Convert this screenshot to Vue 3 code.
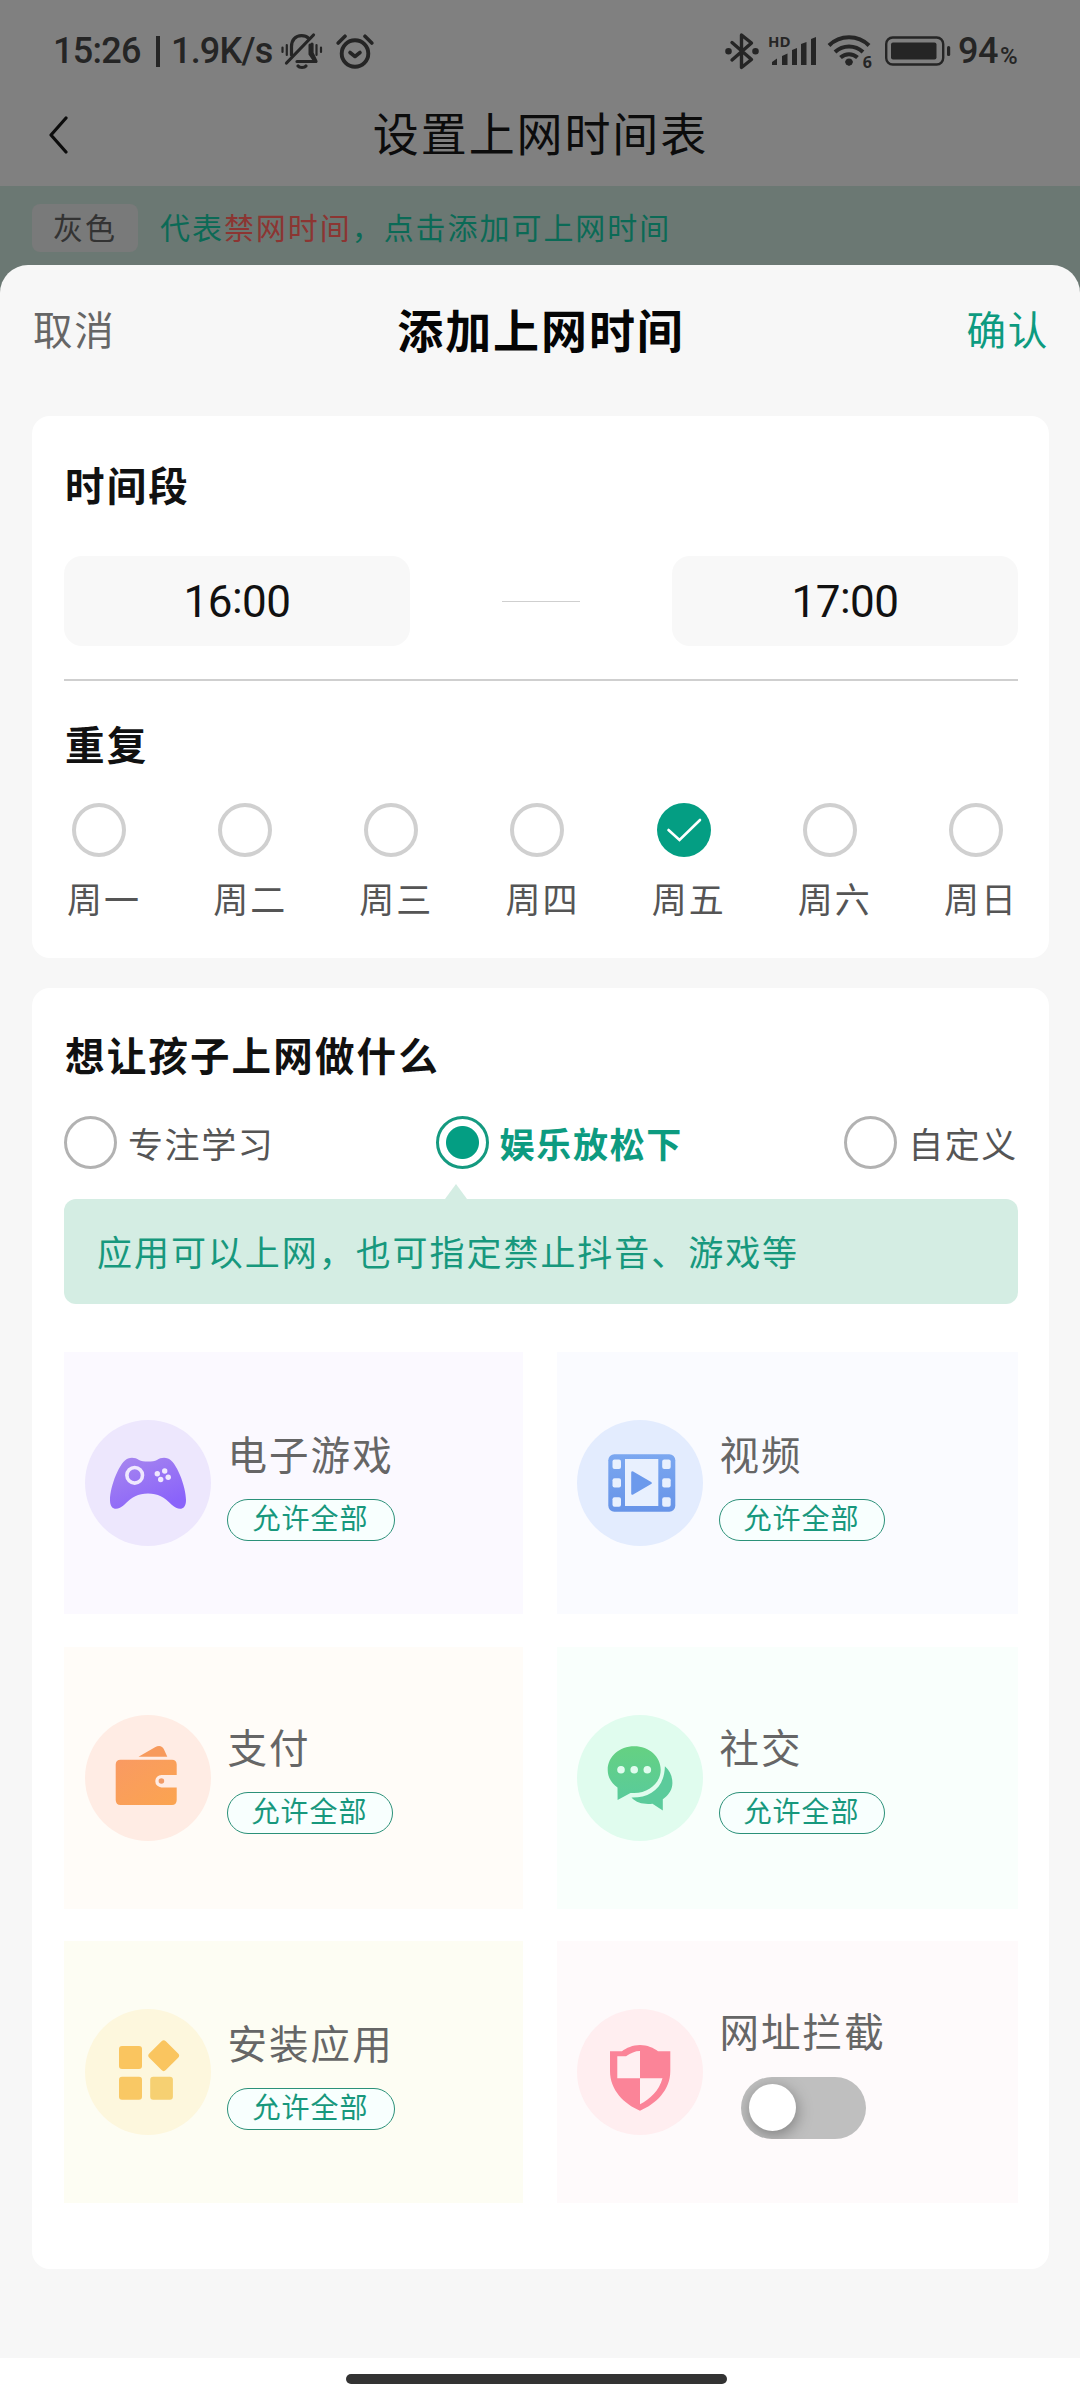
<script setup>
import { ref } from 'vue'

const days = ['周一', '周二', '周三', '周四', '周五', '周六', '周日']
const selectedDay = ref(4)
const modes = ['专注学习', '娱乐放松下', '自定义']
const selectedMode = ref(1)
const tiles = [
  { key: 'game', name: '电子游戏', wide: true },
  { key: 'video', name: '视频' },
  { key: 'pay', name: '支付' },
  { key: 'social', name: '社交' },
  { key: 'install', name: '安装应用', wide: true },
  { key: 'url', name: '网址拦截', toggle: true },
]
</script>

<template>
  <div class="screen">
    <div class="status">
      <span class="clock">15:26</span>
      <span class="bar"></span>
      <span class="speed">1.9K/s</span>
      <svg class="mute" width="42" height="38" viewBox="0 0 42 38" fill="none" stroke="#252525" stroke-width="3.2" stroke-linecap="round">
        <path d="M10.5 23V14.5C10.500 8 14.500 3.600 20.500 3.600C23.500 3.600 26 4.600 27.700 6.400" />
        <path d="M31 12V21L35 29.500H16" stroke-linejoin="round" />
        <path d="M29 13V22L33 28" stroke-width="3" />
        <path d="M5.500 31L32.500 3" />
        <path d="M17 34C18.500 36 23.500 36 25 34" />
        <path d="M1.500 15.500V20M5.800 13V23M35.500 13V23M40 15.500V20" stroke-width="2.200" />
      </svg>
      <svg class="alarm" width="38" height="36" viewBox="0 0 38 36" fill="none" stroke="#252525" stroke-width="3.6" stroke-linecap="round" stroke-linejoin="round">
        <circle cx="19" cy="20.5" r="13.300" stroke-width="3.900" />
        <path d="M14 19.500L19 23.500L24 19.500" />
        <path d="M2.200 10L9 3.200M35.800 10L29 3.200" />
      </svg>
      <span class="grow"></span>
      <svg class="bt" width="34" height="38" viewBox="0 0 34 38" fill="none" stroke="#252525" stroke-width="3.400" stroke-linejoin="round" stroke-linecap="round">
        <path d="M7 10.500L26.500 27.500L16.500 35.500V3L26.500 11L7 28" />
        <circle cx="3.500" cy="19.200" r="1.600" fill="#252525" />
        <circle cx="30.500" cy="19.200" r="1.600" fill="#252525" />
      </svg>
      <div class="signal">
        <svg width="48" height="32" viewBox="0 0 48 32" fill="#252525">
          <path d="M3 27L8 23.500V30H3zM13 21L18.500 18.500V30H13zM23 15L28 13V30H23zM32 9L37.500 7V30H32zM42 4L47 2V30H42z" />
        </svg>
        <span class="hd">HD</span>
      </div>
      <div class="wifi">
        <svg width="44" height="34" viewBox="0 0 44 34" fill="none" stroke="#252525" stroke-width="4">
          <path d="M2 11.500C13 0.500 31 0.500 42 11.500" />
          <path d="M8 18C16 10.500 28 10.500 36 18" />
          <path d="M13.500 23.500C18.500 19 25.500 19 30.500 23.500" />
          <path d="M18 28C20 25 24 25 26 28L22 32z" fill="#252525" stroke="none" />
          <circle cx="22" cy="28" r="3.600" fill="#252525" stroke="none" />
        </svg>
        <span class="six">6</span>
      </div>
      <svg class="battery" width="66" height="30" viewBox="0 0 66 30" fill="none">
        <rect x="1.200" y="1.500" width="57" height="27" rx="6.500" stroke="#252525" stroke-width="2.400" />
        <rect x="6" y="6.500" width="45.500" height="17" rx="2" fill="#252525" />
        <rect x="62" y="10" width="3.200" height="10" rx="1.500" fill="#252525" />
      </svg>
      <span class="pct">94</span><span class="sign">%</span>
    </div>

    <div class="header">
      <svg width="20" height="38" viewBox="0 0 20 38" fill="none" stroke="#0c0c0c" stroke-width="3.200" stroke-linecap="round" stroke-linejoin="round">
        <path d="M17 2L2 19L17 36" />
      </svg>
      <h1>设置上网时间表</h1>
    </div>

    <div class="legend">
      <span class="gray">灰色</span>
      <span class="tip">代表<em>禁网时间</em>，点击添加可上网时间</span>
    </div>

    <div class="sheet">
      <div class="sheet-head">
        <span class="cancel">取消</span>
        <h2>添加上网时间</h2>
        <span class="ok">确认</span>
      </div>

      <section class="card times">
        <h3>时间段</h3>
        <div class="range">
          <div class="input">16<i>:</i>00</div>
          <div class="dash"></div>
          <div class="input">17<i>:</i>00</div>
        </div>
        <div class="divider"></div>
        <h3 class="repeat">重复</h3>
        <div class="days">
          <div v-for="(d, i) in days" :key="d" class="day" @click="selectedDay = i">
            <div class="dot" :class="{ on: i === selectedDay }">
              <svg v-if="i === selectedDay" width="54" height="54" viewBox="0 0 54 54" fill="none" stroke="#fff" stroke-width="2.600" stroke-linecap="round">
                <path d="M11.500 27L22.500 37L43 17" />
              </svg>
            </div>
            <span>{{ d }}</span>
          </div>
        </div>
      </section>

      <section class="card what">
        <h3>想让孩子上网做什么</h3>
        <div class="modes">
          <div v-for="(m, i) in modes" :key="m" class="mode" :class="{ on: i === selectedMode }" @click="selectedMode = i">
            <span class="radio"></span><span>{{ m }}</span>
          </div>
        </div>
        <div class="hint">应用可以上网，也可指定禁止抖音、游戏等</div>
        <div class="tiles">
          <div v-for="t in tiles" :key="t.key" class="tile" :class="t.key">
            <svg v-if="t.key === 'game'" class="icon" viewBox="0 0 126 126">
              <defs><linearGradient id="g1" x1="0" y1="0" x2="0.6" y2="1"><stop offset="0" stop-color="#a888ee" /><stop offset="1" stop-color="#8a63fa" /></linearGradient></defs>
              <circle cx="63" cy="63" r="63" fill="#ede7fd" />
              <path d="M43 38.500C47 37 51 38 54 40C58 42 68 42 72 40C75 38 79 37 83 38.500C91 41 101 66 101 80C101 91 93 90.500 87 85C79 77 73 73.500 63 73.500C53 73.500 47 77 39 85C33 90.500 25 91 25 80C25 66 35 41 43 38.500Z" fill="url(#g1)" />
              <circle cx="49.700" cy="55.300" r="7.800" fill="none" stroke="#efe8fe" stroke-width="3.600" />
              <g fill="#efe8fe"><circle cx="72.300" cy="53.700" r="2.700" /><circle cx="79.700" cy="51" r="2.700" /><circle cx="83.200" cy="57.200" r="2.700" /><circle cx="75.700" cy="59.500" r="2.700" /></g>
            </svg>
            <svg v-else-if="t.key === 'video'" class="icon" viewBox="0 0 126 126">
              <defs><linearGradient id="g2" x1="0" y1="0" x2="0" y2="1"><stop offset="0" stop-color="#7ba7f0" /><stop offset="1" stop-color="#6794e8" /></linearGradient></defs>
              <circle cx="63" cy="63" r="63" fill="#e3ecfe" />
              <rect x="31.300" y="34.300" width="67" height="57.400" rx="6" fill="url(#g2)" />
              <g fill="#e8f0fe"><rect x="48" y="39" width="33.300" height="47" /><rect x="35.500" y="39.500" width="8.500" height="9.500" rx="2" /><rect x="35.500" y="58.300" width="8.500" height="9.300" rx="2" /><rect x="35.500" y="77.200" width="8.500" height="9.500" rx="2" /><rect x="85.200" y="39.500" width="8.500" height="9.500" rx="2" /><rect x="85.200" y="58.300" width="8.500" height="9.300" rx="2" /><rect x="85.200" y="77.200" width="8.500" height="9.500" rx="2" /></g>
              <path d="M55.500 52.500L73.500 63L55.500 73.500Z" fill="#6c9aec" stroke="#6c9aec" stroke-width="2.600" stroke-linejoin="round" />
            </svg>
            <svg v-else-if="t.key === 'pay'" class="icon" viewBox="0 0 126 126">
              <defs><linearGradient id="g3" x1="0" y1="0" x2="1" y2="1"><stop offset="0" stop-color="#f99a62" /><stop offset="1" stop-color="#fba450" /></linearGradient></defs>
              <circle cx="63" cy="63" r="63" fill="#ffece4" />
              <path d="M53.500 41.800L70 32.300C74 30 77.500 31 79 34.500L82.300 41.800Z" fill="#f79a5c" />
              <path d="M35.500 44.700H87C90 44.700 91.700 46.500 91.700 49.500V60H76.500A6.200 6.200 0 0 0 76.500 72.400H91.700V85C91.700 88 90 90 87 90H35.500C32.500 90 30.700 88 30.700 85V49.500C30.700 46.500 32.500 44.700 35.500 44.700Z" fill="url(#g3)" />
              <circle cx="76.400" cy="66" r="2.800" fill="#f19a66" />
            </svg>
            <svg v-else-if="t.key === 'social'" class="icon" viewBox="0 0 126 126">
              <defs><linearGradient id="g4" x1="0" y1="0" x2="0" y2="1"><stop offset="0" stop-color="#65d182" /><stop offset="1" stop-color="#59cb9b" /></linearGradient></defs>
              <circle cx="63" cy="63" r="63" fill="#e0fcee" />
              <path d="M57.200 31.300C72 31.300 83.700 41.800 83.700 54.700C83.700 67.700 72 78 57.200 78H53.500L40.600 85L40.500 72.500C34.500 68.500 30.700 62 30.700 54.700C30.700 41.800 42.500 31.300 57.200 31.300Z" fill="url(#g4)" />
              <path d="M87.900 51.300C93 55.500 95.400 61.500 95.400 68C95.400 74 92.200 80 85.800 84.300V95.500L75.500 88.800C67 89.500 60 88.500 54.500 82.600C73 83 87.500 73 87.900 51.300Z" fill="#5bcb9b" />
              <g fill="#e0fcee"><circle cx="44" cy="54.700" r="3.800" /><circle cx="57.200" cy="54.700" r="3.800" /><circle cx="70.300" cy="54.700" r="3.800" /></g>
            </svg>
            <svg v-else-if="t.key === 'install'" class="icon" viewBox="0 0 126 126">
              <circle cx="63" cy="63" r="63" fill="#fdf7dd" />
              <rect x="34" y="37" width="23" height="23" rx="3" fill="#fac55f" />
              <rect x="34" y="67.700" width="23" height="23" rx="3" fill="#f9c864" />
              <rect x="65.200" y="67.700" width="22.700" height="23" rx="3" fill="#f6d072" />
              <rect x="67" y="35" width="23.400" height="23.400" rx="3" fill="#fac55f" transform="rotate(45 78.700 46.700)" />
            </svg>
            <svg v-else class="icon" viewBox="0 0 126 126">
              <circle cx="63" cy="63" r="63" fill="#ffeef0" />
              <path d="M63 36C70 36 77 39 81 42.300H93.300V62C93.300 81 79 95 63 101.700C47 95 33 81 33 62V42.300H45C49 39 56 36 63 36Z" fill="#fb8498" />
              <path d="M63 42C58 42 54 44 49 47.300H40.300V69.300H63ZM63 69.300H85.500C82 82 73 90 63 95.300Z" fill="#fff0f2" />
            </svg>
            <div class="info">
              <span class="name">{{ t.name }}</span>
              <div v-if="t.toggle" class="switch"><span class="knob"></span></div>
              <span v-else class="pill" :class="{ wide: t.wide }">允许全部</span>
            </div>
          </div>
        </div>
      </section>
    </div>
    <div class="nav"><div class="home"></div></div>
  </div>
</template>

<style>
body { margin: 0; background: #fff; }
</style>

<style scoped>
* { box-sizing: border-box; }
.screen {
  width: 1080px; height: 2400px; overflow: hidden;
  display: flex; flex-direction: column;
  background: #808080; font-family: "Noto Sans CJK SC", sans-serif; white-space: nowrap;
}
h1, h2, h3 { margin: 0; }
em, i { font-style: normal; }
svg { display: block; flex: none; }

.status {
  height: 102px; flex: none; display: flex; align-items: center;
  padding: 0 58px 0 53px; color: #252525;
  font: 500 36px/40px Roboto, sans-serif;
}
.clock { width: 103px; letter-spacing: -0.7px; }
.bar { width: 4px; height: 31px; background: #252525; margin-right: 11px; }
.speed { width: 110px; letter-spacing: -0.8px; }
.mute { margin-right: 13px; }
.grow { flex: 1; }
.bt { margin-right: 10px; }
.signal, .wifi { position: relative; flex: none; }
.signal { margin-right: 10px; }
.hd { position: absolute; left: -1px; top: -1px; font: 700 15px/14px "Open Sans", sans-serif; }
.six { position: absolute; right: -1px; bottom: -1px; font: 700 16px/16px "Open Sans", sans-serif; background: #808080; height: 15px; padding-left: 1px; }
.wifi { margin-right: 14px; }
.battery { margin-right: 7px; }
.pct { width: 42px; letter-spacing: -0.5px; }
.sign { width: 22px; font-size: 24px; padding-top: 9px; }

.header {
  height: 84px; flex: none; display: flex; align-items: center; padding: 0 49px 18px;
}
.header h1 { flex: 1; text-align: center; padding: 0 19px 8px 0; font-weight: 400; font-size: 46px; line-height: 60px; letter-spacing: 1.900px; color: #0c0c0c; }

.legend {
  height: 120px; flex: none; background: #6b7873; display: flex; align-items: flex-start; padding: 18px 32px 0;
  font-size: 30px; line-height: 44px; letter-spacing: 1.950px; color: #0b6a56;
}
.gray { width: 106px; height: 48px; border-radius: 8px; background: #797a7a; color: #333; text-align: center; margin-right: 22px; }
.legend em { color: #8c3532; }

.sheet {
  position: relative; margin-top: -41px; height: 2093px; flex: none; background: #f7f7f7;
  border-radius: 28px 28px 0 0; padding: 0 31px 0 32px;
}
.sheet-head { height: 151px; display: flex; align-items: flex-start; justify-content: space-between; padding: 33px 0 0 1px; font-size: 39.500px; line-height: 60px; letter-spacing: 1.700px; }
.cancel { color: #666; }
.ok { color: #0d9b80; }
h2 { font-size: 46px; line-height: 60px; letter-spacing: 1.900px; font-weight: 700; color: #050505; }

.card { background: #fff; border-radius: 18px; padding: 0 31px 0 32px; }
h3 { font-size: 39.500px; line-height: 60px; letter-spacing: 2.150px; font-weight: 700; color: #111; }
.times { height: 542px; padding-top: 38px; margin-bottom: 30px; }
.times h3, .what h3 { padding-left: 1px; }
.range { display: flex; align-items: center; justify-content: space-between; margin-top: 42px; }
.input { width: 346px; height: 90px; border-radius: 18px; background: #f8f8f8; text-align: center; font: 400 44px/92px Roboto, sans-serif; letter-spacing: -0.500px; color: #111; }
.input i { vertical-align: 4px; line-height: 1; }
.dash { width: 78px; height: 1px; background: #cfcfcf; margin-left: 4px; margin-right: 4px; }
.divider { height: 2px; background: #cfcfcf; margin-top: 33px; }
.repeat { margin-top: 32px; }
.days { display: flex; justify-content: space-between; margin-top: 30px; padding: 0 1px 0 3px; }
.day { width: 73px; display: flex; flex-direction: column; font-size: 35px; line-height: 50px; letter-spacing: 2px; color: #555; }
.dot { width: 54px; height: 54px; margin: 0 0 16px 5px; border: 4px solid #d0d0d0; border-radius: 50%; }
.dot.on { border: 0; background: #049e83; }

.what { height: 1281px; padding-top: 36px; }
.modes { display: flex; justify-content: space-between; margin-top: 32px; font-size: 35px; line-height: 53px; letter-spacing: 1.600px; color: #555; }
.mode { display: flex; align-items: center; }
.radio { width: 53px; height: 53px; border: 3px solid #b2b2b2; border-radius: 50%; margin-right: 11px; }
.mode.on { color: #0d9b80; font-weight: 700; letter-spacing: 1.700px; }
.mode.on .radio { border-color: #149a80; background: radial-gradient(circle, #049e83 16px, #fff 17px); }
.hint {
  position: relative; height: 105px; margin-top: 30px; border-radius: 12px; background: #d4ede3;
  padding-left: 33px; font-size: 35px; line-height: 104px; letter-spacing: 1.950px; color: #17987d;
}
.hint::before { content: ""; position: absolute; left: 381px; top: -15px; border: solid transparent; border-width: 0 11px 15px; border-bottom-color: #d4ede3; }

.tiles { display: grid; grid-template-columns: 459px 461px; justify-content: space-between; grid-auto-rows: 262px; row-gap: 32.500px; margin-top: 48px; }
.tile { display: flex; align-items: center; padding-left: 20.500px; }
.tile.game { background: #fbf9ff; }
.tile.video { background: #fafbff; padding-left: 19.500px; }
.tile.pay { background: #fffcf8; }
.tile.social { background: #f9fffc; padding-left: 19.500px; }
.tile.install { background: #fdfdf3; }
.tile.url { background: #fefafb; padding-left: 19.500px; }
.icon { width: 126px; height: 126px; margin-right: 16px; }
.info { display: flex; flex-direction: column; align-items: flex-start; }
.name { font-size: 39.500px; line-height: 56px; height: 74px; letter-spacing: 2.050px; padding-left: 1px; color: #666; }
.pay .info, .social .info { padding-bottom: 3px; }
.url .name { height: 72px; line-height: 50px; }
.pill { width: 166px; height: 42px; border: 1.500px solid #2b9179; border-radius: 21px; background: #f8fffe; text-align: center; font-size: 28px; line-height: 35px; letter-spacing: 1px; color: #17987d; }
.pill.wide { width: 168px; }
.switch { width: 125px; height: 62px; margin-left: 22px; border-radius: 31px; background: #bfbfbf; padding: 7px 8px; overflow: hidden; }
.knob { display: block; width: 47px; height: 47px; border-radius: 50%; background: #fff; box-shadow: 1px 4px 16px rgba(0, 0, 0, 0.350); }

.nav { flex: 1; background: #fff; padding: 16px 0 0 346px; }
.home { width: 381px; height: 10px; border-radius: 5px; background: #333; }
</style>
